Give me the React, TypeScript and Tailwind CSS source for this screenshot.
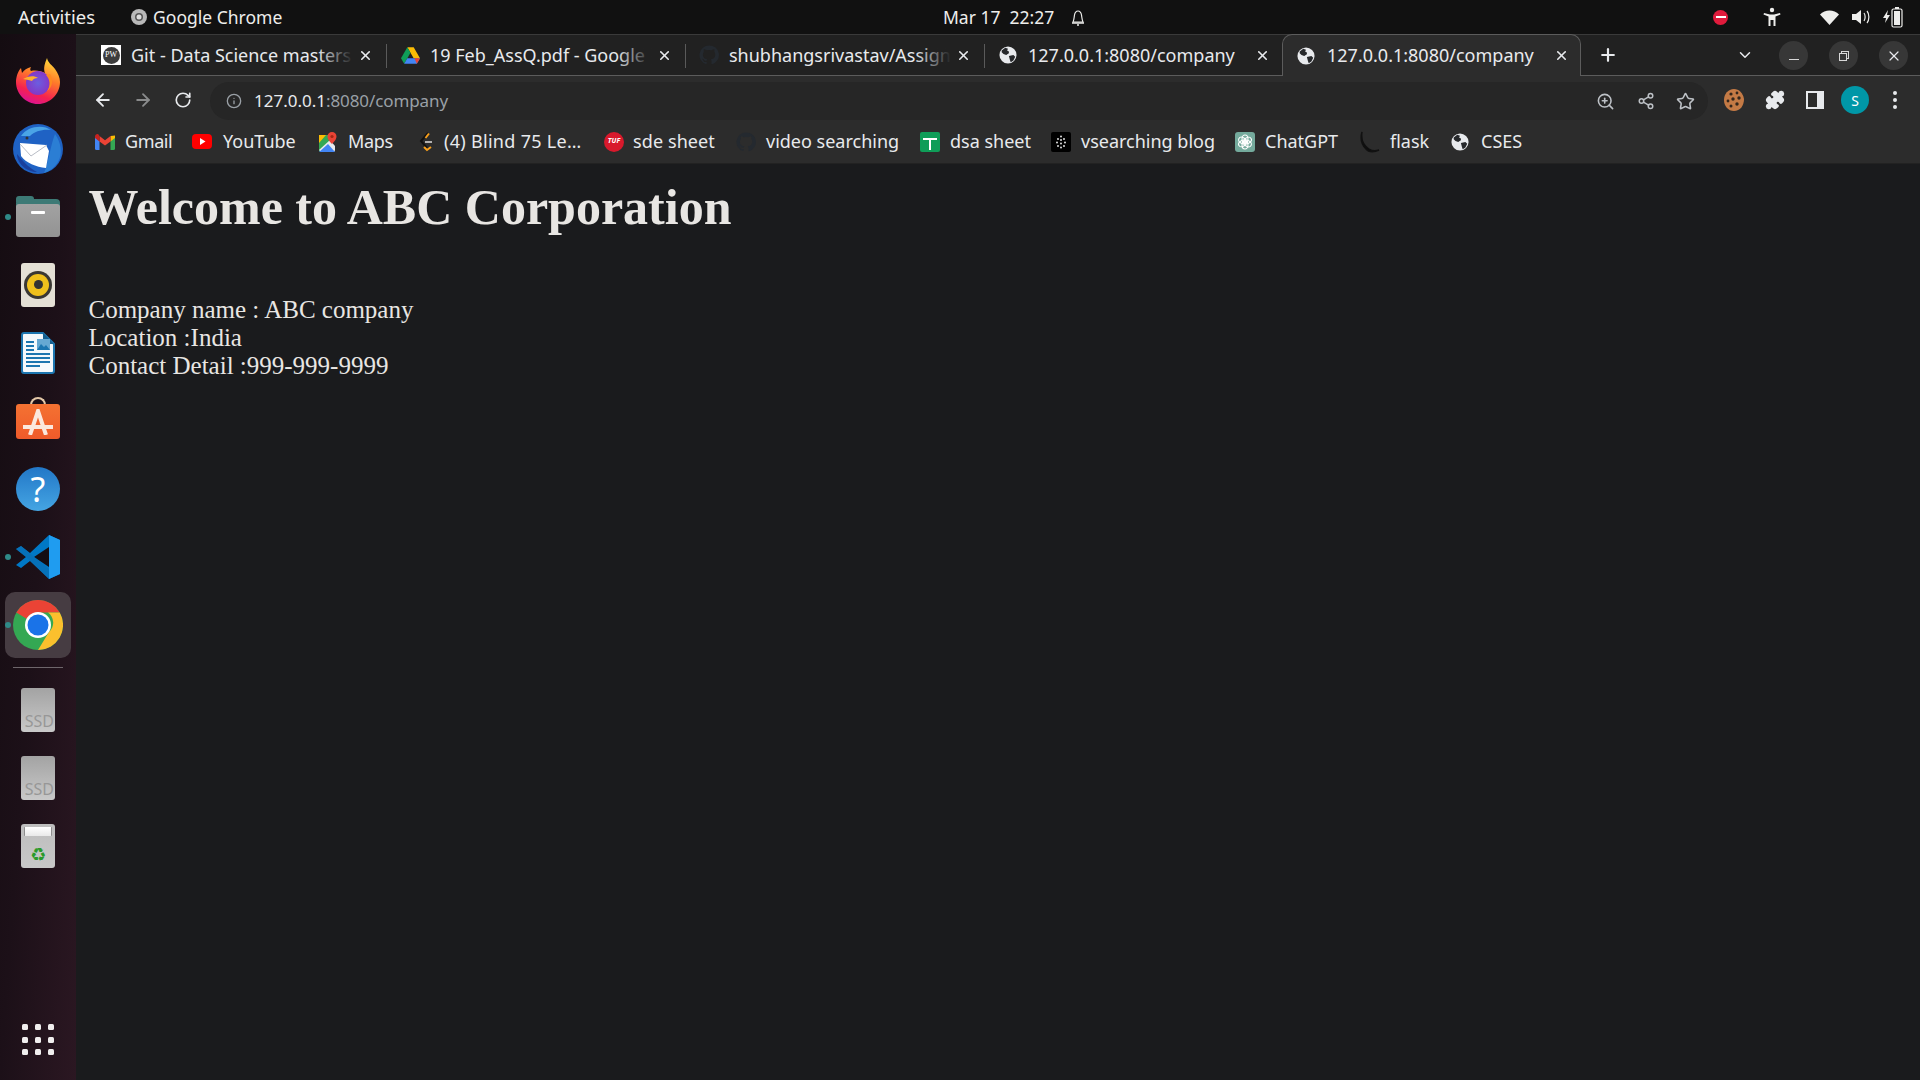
import React from "react";
import { ArrowLeft, ArrowRight, RotateCw, Info, ZoomIn, Share2, Star, Puzzle, Plus, X, ChevronDown } from "lucide-react";

const Globe = ({ c = "#e8eaed", s = 18 }: { c?: string; s?: number }) => (
  <svg width={s} height={s} viewBox="0 0 20 20" className="shrink-0">
    <circle cx="10" cy="10" r="9.5" fill={c} />
    <path d="M3 5l4-3 3 1-1 2 2 1v2l-3 2-3-1-2-2zM11 11l5-1 2 2-2 4-3 2-1-3z" fill="#26282b" />
  </svg>
);
const GitHubMark = ({ s = 20 }: { s?: number }) => (
  <svg width={s} height={s} viewBox="0 0 24 24" className="shrink-0" fill="#24292f">
    <path d="M12 .5a11.5 11.5 0 0 0-3.6 22.4c.6.1.8-.3.8-.6v-2c-3.2.7-3.9-1.5-3.9-1.5-.5-1.3-1.3-1.7-1.3-1.7-1-.7.1-.7.1-.7 1.2.1 1.8 1.2 1.8 1.2 1 1.8 2.7 1.3 3.4 1 .1-.8.4-1.3.7-1.6-2.6-.3-5.3-1.3-5.3-5.7 0-1.3.5-2.3 1.2-3.1-.1-.3-.5-1.5.1-3.1 0 0 1-.3 3.2 1.2a11 11 0 0 1 5.8 0c2.2-1.5 3.2-1.2 3.2-1.2.6 1.6.2 2.8.1 3.1.8.8 1.2 1.8 1.2 3.1 0 4.4-2.7 5.4-5.3 5.7.4.4.8 1.1.8 2.2v3.2c0 .3.2.7.8.6A11.5 11.5 0 0 0 12 .5z" />
  </svg>
);
const Drive = () => (
  <svg width="19" height="17" viewBox="0 0 24 21" className="shrink-0">
    <path d="M8 0h8l8 14h-8z" fill="#fbbc04" />
    <path d="M8 0l4 7-8 14-4-7z" fill="#0f9d58" />
    <path d="M8 14h16l-4 7H4z" fill="#4285f4" />
    <path d="M20 21l4-7h-7z" fill="#ea4335" />
  </svg>
);
const PW = () => (
  <div className="w-5 h-5 bg-white flex items-center justify-center shrink-0">
    <div className="w-[17px] h-[17px] rounded-full bg-[#3c3c3c] flex items-center justify-center text-[8px] text-white font-['Liberation_Serif',serif] leading-none">PW</div>
  </div>
);

const tabs = [
  { icon: <PW />, title: "Git - Data Science masters", fade: true },
  { icon: <Drive />, title: "19 Feb_AssQ.pdf - Google", fade: true },
  { icon: <GitHubMark />, title: "shubhangsrivastav/Assign", fade: true },
  { icon: <Globe />, title: "127.0.0.1:8080/company", fade: false },
];

const Tab = ({ icon, title, fade, last }: { icon: React.ReactNode; title: string; fade: boolean; last: boolean }) => (
  <div className="relative w-[299px] h-[41px] shrink-0 flex items-center pl-[13px] pb-[1px]">
    <div className="w-5 flex justify-center shrink-0">{icon}</div>
    <div className="relative ml-[10px] w-[222px] overflow-hidden whitespace-nowrap text-[18px] text-[#e8eaed]">
      {title}
      {fade && <div className="absolute right-0 top-0 bottom-0 w-[36px] bg-gradient-to-r from-transparent to-[#212121]" />}
    </div>
    <X size={15} strokeWidth={2.5} className="ml-[5px] text-[#e8eaed] shrink-0" />
    {!last && <div className="absolute right-0 top-[9px] w-[1px] h-[24px] bg-[#5a5a5a]" />}
  </div>
);

const Gmail = () => (
  <svg width="20" height="16" viewBox="0 0 20 16" className="shrink-0">
    <path d="M0 3v11.5A1.5 1.5 0 0 0 1.5 16H4.5V7z" fill="#4285f4" />
    <path d="M20 3v11.5a1.5 1.5 0 0 1-1.5 1.5h-3V7z" fill="#34a853" />
    <path d="M15.500 2L20 1.500V4l-4.500 3.400z" fill="#fbbc04" />
    <path d="M4.500 7.400V2L10 6.200 15.500 2v5.400L10 11.500z" fill="#ea4335" />
    <path d="M0 4V2.500C0 .5 2.300-.5 3.500.5L4.500 2v5.400z" fill="#c5221f" />
  </svg>
);
const YT = () => (
  <svg width="20" height="15" viewBox="0 0 20 15" className="shrink-0">
    <rect width="20" height="15" rx="4" fill="#f00" />
    <path d="M8 4l5.500 3.500L8 11z" fill="#fff" />
  </svg>
);
const Maps = () => (
  <svg width="18" height="20" viewBox="0 0 18 20" className="shrink-0">
    <path d="M0 3h11v17H2a2 2 0 0 1-2-2z" fill="#34a853" />
    <path d="M0 3h7L0 11z" fill="#fbbc04" />
    <path d="M0 18l11-10 5 6v4a2 2 0 0 1-2 2H2z" fill="#e8eaed" />
    <path d="M0 20l9-8 7 8z" fill="#4285f4" />
    <path d="M13 0a4.500 4.500 0 0 1 4.500 4.500C17.500 8 13 12 13 12S8.500 8 8.500 4.500A4.500 4.500 0 0 1 13 0z" fill="#ea4335" />
    <circle cx="13" cy="4.500" r="1.600" fill="#a52714" />
  </svg>
);
const LeetCode = () => (
  <svg width="20" height="22" viewBox="0 0 20 22" className="shrink-0" fill="none">
    <path d="M12 2L5 10l6 7" stroke="#111" strokeWidth="2" />
    <path d="M13 2.500L9.500 7" stroke="#f89f1b" strokeWidth="2" />
    <path d="M9 11h7" stroke="#b3b1b0" strokeWidth="2" />
    <path d="M8 16l3 3 4-3" stroke="#f89f1b" strokeWidth="2" />
  </svg>
);
const Tuf = () => (
  <div className="w-5 h-5 rounded-full bg-[#d8192c] flex items-center justify-center text-[7px] font-bold italic text-white shrink-0">TUF</div>
);
const Sheet = () => (
  <div className="relative w-5 h-5 rounded-[2px] bg-[#0f9d58] shrink-0">
    <div className="absolute left-[3px] right-[3px] top-[6px] h-[2px] bg-white" />
    <div className="absolute left-[9px] w-[2px] top-[6px] bottom-[2px] bg-white" />
  </div>
);
const Vs = () => (
  <div className="w-5 h-5 rounded-[2px] bg-black flex items-center justify-center shrink-0">
    <svg width="12" height="14" viewBox="0 0 12 14" fill="#ddd">
      <circle cx="6" cy="1.500" r="1" /><circle cx="3" cy="4" r="1" /><circle cx="9" cy="4" r="1" />
      <circle cx="6" cy="5" r="1" /><circle cx="2" cy="7.500" r="1" /><circle cx="10" cy="7.500" r="1" />
      <circle cx="6" cy="8.500" r="1" /><circle cx="3" cy="11" r="1" /><circle cx="9" cy="11" r="1" /><circle cx="6" cy="12.500" r="1" />
    </svg>
  </div>
);
const Gpt = () => (
  <div className="w-5 h-5 rounded-[3px] bg-[#74aa9c] flex items-center justify-center shrink-0">
    <svg width="16" height="16" viewBox="0 0 16 16" fill="none" stroke="#fff" strokeWidth="1.100">
      <ellipse cx="8" cy="5" rx="3" ry="4" />
      <ellipse cx="8" cy="5" rx="3" ry="4" transform="rotate(60 8 8)" />
      <ellipse cx="8" cy="5" rx="3" ry="4" transform="rotate(120 8 8)" />
      <ellipse cx="8" cy="5" rx="3" ry="4" transform="rotate(180 8 8)" />
      <ellipse cx="8" cy="5" rx="3" ry="4" transform="rotate(240 8 8)" />
      <ellipse cx="8" cy="5" rx="3" ry="4" transform="rotate(300 8 8)" />
    </svg>
  </div>
);
const Flask = () => (
  <svg width="20" height="22" viewBox="0 0 20 22" className="shrink-0">
    <path d="M2 1c-1 6 1 13 7 17 3 2 7 2 10 1-4 2-10 3-13-1C2 14 0 8 2 1z" fill="#0b0b0b" stroke="#111" strokeWidth="1.500" />
  </svg>
);

const bookmarks = [
  { icon: <Gmail />, label: "Gmail", w: "w-[97px]", tx: "ml-[10px] tracking-[-0.4px]" },
  { icon: <YT />, label: "YouTube", w: "w-[127px]", tx: "ml-[11px]" },
  { icon: <Maps />, label: "Maps", w: "w-[97px]", tx: "ml-[11px] tracking-[-0.3px]" },
  { icon: <LeetCode />, label: "(4) Blind 75 Le…", w: "w-[188px]", tx: "ml-[8px] tracking-[0.3px]" },
  { icon: <Tuf />, label: "sde sheet", w: "w-[132px]", tx: "ml-[9px] tracking-[0.1px]" },
  { icon: <GitHubMark />, label: "video searching", w: "w-[184px]", tx: "ml-[10px]" },
  { icon: <Sheet />, label: "dsa sheet", w: "w-[131px]", tx: "ml-[10px]" },
  { icon: <Vs />, label: "vsearching blog", w: "w-[184px]", tx: "ml-[10px]" },
  { icon: <Gpt />, label: "ChatGPT", w: "w-[125px]", tx: "ml-[10px]" },
  { icon: <Flask />, label: "flask", w: "w-[91px]", tx: "ml-[10px]" },
  { icon: <Globe />, label: "CSES", w: "w-[73px]", tx: "ml-[12px]" },
];

const Firefox = () => (
  <svg width="44" height="46" viewBox="0 0 44 46">
    <defs>
      <linearGradient id="ffa" x1="0.7" y1="0" x2="0.3" y2="1"><stop offset="0" stopColor="#ffd83a" /><stop offset="0.4" stopColor="#ff7a2a" /><stop offset="0.75" stopColor="#f5224f" /><stop offset="1" stopColor="#d9119a" /></linearGradient>
      <radialGradient id="ffb" cx="0.5" cy="0.5" r="0.6"><stop offset="0" stopColor="#6b5ee0" /><stop offset="1" stopColor="#8a2fc0" /></radialGradient>
    </defs>
    <path d="M31 0c1 5 5 7 8 11 3 4 5 9 5 13 0 12-10 22-22 22S0 36 0 24c0-5 2-11 5-14l1 5c2-3 5-5 9-6-1 2-1 3 0 4 5-1 10 0 14 2-2-5 0-10 2-15z" fill="url(#ffa)" />
    <circle cx="22" cy="25" r="12" fill="url(#ffb)" />
    <path d="M7 21c5-3 11-4 15-1-3 0-5 1-6 3-2-1-5-1-9-2z" fill="#ffb02e" />
    <path d="M30 17c4 4 5 11 1 16 5-3 7-11 3-17z" fill="#ff8a1f" />
  </svg>
);
const Thunderbird = () => (
  <svg width="50" height="50" viewBox="0 0 50 50">
    <circle cx="25" cy="25" r="25" fill="#1f62c4" />
    <path d="M8 12C14 2 30 0 38 6c-8-1-16 1-21 6z" fill="#4aa4e6" />
    <path d="M42 10c6 8 8 20 3 28-3 5-8 9-14 11 4-8 6-26 11-39z" fill="#2b7ed4" />
    <path d="M4 30C4 40 14 48 24 48c-6-3-12-8-20-18z" fill="#1a3f9c" />
    <path d="M7 19l26 2 3 6-3 17c-10-1-20-5-25-12z" fill="#fff" />
    <path d="M7 20l11 12 16-11" fill="none" stroke="#b9bdc6" strokeWidth="1" />
    <circle cx="14" cy="14" r="1.500" fill="#333" />
  </svg>
);
const Files = () => (
  <div className="relative w-11 h-[41px]">
    <div className="absolute left-0 top-0 w-[18px] h-[6px] rounded-t-[3px] bg-[#3d7a76]" />
    <div className="absolute left-0 right-0 top-[3px] h-[14px] rounded-t-[4px] bg-[#3d7a76]" />
    <div className="absolute left-0 right-0 top-[8px] bottom-0 rounded-[3px] bg-gradient-to-b from-[#a2a2a2] to-[#939393]" />
    <div className="absolute left-[15px] top-[15px] w-[14px] h-[3px] rounded-[1px] bg-white" />
  </div>
);
const Rhythmbox = () => (
  <div className="w-[34px] h-11 rounded-[3px] bg-[#e4e0d5] flex items-center justify-center">
    <div className="w-7 h-7 rounded-full bg-[#3a3833] flex items-center justify-center">
      <div className="w-[22px] h-[22px] rounded-full bg-[#f0c11c] flex items-center justify-center">
        <div className="w-[9px] h-[9px] rounded-full bg-[#333]" />
      </div>
    </div>
  </div>
);
const Writer = () => (
  <svg width="34" height="42" viewBox="0 0 34 42">
    <path d="M1 3a2 2 0 0 1 2-2h19l11 11v27a2 2 0 0 1-2 2H3a2 2 0 0 1-2-2z" fill="#f4f9fc" stroke="#1c76b0" strokeWidth="2" />
    <path d="M22 1l11 11H22z" fill="#155f8e" />
    <path d="M5 10h8M5 14h8M5 18h8M5 22h24M5 26h24M5 30h24M5 34h14" stroke="#1c76b0" strokeWidth="2" />
    <rect x="16" y="7" width="13" height="11" fill="#66a8d2" />
    <path d="M16 18l4-6 3 3 2-2 4 5z" fill="#1c76b0" />
  </svg>
);
const Software = () => (
  <div className="relative w-11 h-[42px] -mt-[5px]">
    <div className="absolute left-[14px] top-0 w-4 h-4 rounded-t-full border-2 border-b-0 border-[#e3c8a8]" />
    <div className="absolute left-0 right-0 top-[7px] bottom-0 rounded-[3px] bg-gradient-to-b from-[#f47232] to-[#ef5a2a] flex items-center justify-center">
      <svg width="30" height="26" viewBox="0 0 30 26" fill="none" stroke="#fbe8dd" strokeWidth="4">
        <path d="M7 26L15 2l8 24M0 18h30" />
      </svg>
    </div>
  </div>
);
const Help = () => (
  <div className="w-11 h-11 rounded-full bg-gradient-to-b from-[#2277c7] to-[#45a5e3] flex items-center justify-center text-[34px] text-white font-['Noto_Sans',sans-serif] leading-none">?</div>
);
const VSCode = () => (
  <svg width="44" height="44" viewBox="0 0 44 44">
    <path d="M33 0l11 5v34l-11 5L14 26 5 33l-5-3 10-8L0 14l5-3 9 7z" fill="#0078c6" />
    <path d="M33 0l11 5v34l-11 5z" fill="#1f9cf0" />
    <path d="M33 12L18 22l15 10z" fill="#140d12" />
    <path d="M0 14l5-3 28 23v10L10 22z" fill="#0a6db0" opacity="0.6" />
  </svg>
);
const Chrome = () => (
  <svg width="50" height="50" viewBox="0 0 50 50">
    <circle cx="25" cy="25" r="25" fill="#34a853" />
    <path d="M25 0a25 25 0 0 1 21.700 12.500H25a12.500 12.500 0 0 0-11 6.500L3.300 12.500A25 25 0 0 1 25 0z" fill="#ea4335" />
    <path d="M46.700 12.500A25 25 0 0 1 25 50l11-18a12.500 12.500 0 0 0-1-19.500z" fill="#fbc02d" />
    <circle cx="25" cy="25" r="13" fill="#fff" />
    <circle cx="25" cy="25" r="10.500" fill="#1a73e8" />
  </svg>
);
const Ssd = () => (
  <div className="w-[34px] h-11 rounded-[3px] bg-gradient-to-b from-[#a3a3a3] to-[#c9c9c9] flex items-end justify-end pr-[1px] pb-[3px]">
    <span className="text-[16px] text-[#979797] font-['Noto_Sans',sans-serif] leading-none whitespace-nowrap">SSD</span>
  </div>
);
const Trash = () => (
  <div className="w-[34px] h-11 rounded-[3px] bg-gradient-to-b from-[#bdbdbd] to-[#c8c8c8] flex flex-col items-center pt-[3px]">
    <div className="w-[28px] h-[9px] rounded-[1px] bg-gradient-to-b from-white to-[#e9e9e9] border-l border-r border-[#8e8e8e]" />
    <span className="mt-[10px] text-[18px] text-[#2a9a2a] leading-none font-['DejaVu_Sans',sans-serif]">♻</span>
  </div>
);

const DockSlot = ({ children, dot, active }: { children: React.ReactNode; dot?: boolean; active?: boolean }) => (
  <div className="relative h-[68px] w-full flex items-center justify-center">
    {active && <div className="absolute left-[5px] top-[1px] w-[66px] h-[66px] rounded-[10px] bg-[#463c42]" />}
    <div className="relative flex items-center justify-center">{children}</div>
    {dot && <div className="absolute left-[5px] top-[31px] w-[6px] h-[6px] rounded-full bg-[#2f8a88]" />}
  </div>
);

const SidePanelIcon = () => (
  <div className="w-[18px] h-[18px] border-[2.5px] border-[#e8eaed] border-r-[7px] bg-transparent" />
);
const Cookie = () => (
  <svg width="20" height="22" viewBox="0 0 20 22" fill="#33261c">
    <path d="M10 0c5 0 9 4 10 10 0 7-4 12-10 12S0 17 0 11 4 0 10 0z" fill="#c47a45" />
    <circle cx="7" cy="5" r="1.600" /><circle cx="13" cy="4" r="1.400" /><circle cx="15" cy="9" r="1.700" />
    <circle cx="9" cy="10" r="1.700" /><circle cx="4" cy="12" r="1.400" /><circle cx="13" cy="15" r="1.700" /><circle cx="7" cy="17" r="1.500" />
  </svg>
);

export default function App() {
  return (
    <div className="w-[1920px] h-[1080px] overflow-hidden flex flex-col bg-[#181a1b] font-['Noto_Sans',sans-serif]">
      {/* GNOME top bar */}
      <div className="relative h-[34px] shrink-0 bg-[#111111] flex items-center text-[17.500px] text-[#eeeeec]">
        <span className="ml-[18px] text-[18.500px]">Activities</span>
        <div className="ml-[36px] flex items-center">
          <svg width="16" height="16" viewBox="0 0 16 16"><circle cx="8" cy="8" r="8" fill="#b9b9b9" /><circle cx="8" cy="8" r="4" fill="#555" /><circle cx="8" cy="8" r="2.500" fill="#ddd" /></svg>
          <span className="ml-[6px]">Google Chrome</span>
        </div>
        <div className="absolute left-[943px] top-0 h-full flex items-center">
          <span>Mar 17&nbsp;&nbsp;22:27</span>
          <svg className="ml-[17px]" width="14" height="17" viewBox="0 0 14 17" fill="none" stroke="#eeeeec" strokeWidth="1.200">
            <path d="M2 13c1-2 1-4 1.500-7C4 3 5 2 7 2s3 1 3.500 4c.5 3 .5 5 1.500 7z" />
            <path d="M1 14h12" strokeWidth="1.500" /><path d="M6 16h2" strokeWidth="1.500" />
          </svg>
        </div>
        <div className="ml-auto flex items-center mr-[17px]">
          <div className="w-[15px] h-[15px] rounded-full bg-[#e01b3c] flex items-center justify-center mr-[34px]"><div className="w-[10px] h-[2.500px] bg-white" /></div>
          <svg width="20" height="20" viewBox="0 0 20 20" fill="#eeeeec" className="mr-[38px]">
            <circle cx="10" cy="3" r="2.200" /><path d="M2 6l6 1.500h4L18 6l.5 1.500-5 2V19h-2v-6H8.500v6h-2V9.500l-5-2z" />
          </svg>
          <svg width="19" height="15" viewBox="0 0 19 15" fill="#eeeeec" className="mr-[13px]"><path d="M9.500 15L0 4.500C5 -1 14 -1 19 4.500z" /></svg>
          <svg width="18" height="16" viewBox="0 0 18 16" fill="#eeeeec" className="mr-[13px]">
            <path d="M0 5h4l5-4v14l-5-4H0z" /><path d="M12 4c1.500 2 1.500 6 0 8M15 2c2.500 3 2.500 9 0 12" fill="none" stroke="#eeeeec" strokeWidth="1.200" />
          </svg>
          <svg width="20" height="22" viewBox="0 0 20 22" fill="none">
            <path d="M5 4L0 12h3l-1 5 5-8H4z" fill="#eeeeec" />
            <rect x="9" y="3" width="10" height="18" rx="1.500" stroke="#eeeeec" strokeWidth="1.200" /><rect x="11" y="5" width="6" height="14" fill="#eeeeec" /><rect x="12" y="1" width="4" height="2" fill="#eeeeec" />
          </svg>
        </div>
      </div>

      <div className="flex flex-1 min-h-0">
        {/* Dock */}
        <div className="w-[76px] shrink-0 flex flex-col bg-gradient-to-br from-[#140c11] via-[#1c1018] to-[#2b1722] pt-[12.500px] pb-[25px]">
          <DockSlot><Firefox /></DockSlot>
          <DockSlot><Thunderbird /></DockSlot>
          <DockSlot dot><Files /></DockSlot>
          <DockSlot><Rhythmbox /></DockSlot>
          <DockSlot><Writer /></DockSlot>
          <DockSlot><Software /></DockSlot>
          <DockSlot><Help /></DockSlot>
          <DockSlot dot><VSCode /></DockSlot>
          <DockSlot dot active><Chrome /></DockSlot>
          <div className="mx-[13px] mt-[8px] h-[1px] bg-[#6e666b] shrink-0" />
          <div className="mt-[8px] flex flex-col">
            <DockSlot><Ssd /></DockSlot>
            <DockSlot><Ssd /></DockSlot>
            <DockSlot><Trash /></DockSlot>
          </div>
          <div className="mt-auto ml-[22px] grid grid-cols-3 gap-x-[6.500px] gap-y-[6.500px] w-[32px]">
            {[0, 1, 2, 3, 4, 5, 6, 7, 8].map((i) => (
              <div key={i} className="w-[6px] h-[6px] rounded-[1.500px] bg-[#f0eeee]" />
            ))}
          </div>
        </div>

        {/* Browser window */}
        <div className="flex-1 min-w-0 flex flex-col">
          <div className="relative h-[42px] shrink-0 bg-[#212121] border-t border-[#3a3a3a] border-b border-b-[#5c5c5c] flex items-start pl-[12px] box-border">
            {tabs.map((t, i) => (
              <Tab key={i} icon={t.icon} title={t.title} fade={t.fade} last={i === 3} />
            ))}
            <div className="relative z-10 w-[299px] h-[42px] shrink-0 -mt-[1px] rounded-t-[10px] bg-[#2c2c2c] border border-b-0 border-[#5c5c5c] flex items-center pl-[14px] ml-[-2px] text-[18px] text-[#e8eaed]">
              <Globe />
              <span className="ml-[12px] w-[224px] whitespace-nowrap">127.0.0.1:8080/company</span>
              <X size={15} strokeWidth={2.5} className="ml-[3px]" />
            </div>
            <Plus size={20} strokeWidth={2.6} className="ml-[17px] mt-[10px] text-[#e8eaed]" />
            <ChevronDown size={18} strokeWidth={2} className="ml-[118px] mt-[11px] text-[#e8eaed]" />
            <div className="ml-[25px] mt-[6px] w-[29px] h-[29px] rounded-full bg-[#373737] flex items-center justify-center">
              <div className="mt-[8px] w-[10px] h-[1.500px] bg-[#d8d8d8]" />
            </div>
            <div className="ml-[21px] mt-[6px] w-[29px] h-[29px] rounded-full bg-[#373737] flex items-center justify-center">
              <div className="relative w-[10px] h-[10px]">
                <div className="absolute right-0 top-0 w-[8px] h-[8px] border border-[#d8d8d8]" />
                <div className="absolute left-0 bottom-0 w-[8px] h-[8px] border border-[#d8d8d8] bg-[#373737]" />
              </div>
            </div>
            <div className="ml-[21px] mt-[6px] w-[29px] h-[29px] rounded-full bg-[#373737] flex items-center justify-center">
              <X size={16} strokeWidth={1.800} className="text-[#e8eaed]" />
            </div>
          </div>

          {/* Toolbar */}
          <div className="h-[44px] shrink-0 bg-[#2c2c2c] flex items-center pl-[17px] pt-[4px]">
            <ArrowLeft size={20} strokeWidth={2.200} className="text-[#e8eaed]" />
            <ArrowRight size={20} strokeWidth={2.200} className="ml-[20px] text-[#8a8b8c]" />
            <RotateCw size={18} strokeWidth={2.200} className="ml-[21px] text-[#e8eaed]" />
            <div className="ml-[18px] flex-1 h-[38px] rounded-full bg-[#262626] flex items-center pl-[16px] text-[17px] mt-[2px]">
              <Info size={16} strokeWidth={2} className="text-[#9aa0a6]" />
              <span className="ml-[12px] text-[#e8eaed] -mt-[1px]">127.0.0.1</span>
              <span className="text-[#9aa0a6] -mt-[1px] tracking-[-0.1px]">:8080/company</span>
              <ZoomIn size={19} strokeWidth={2} className="ml-auto text-[#bdc1c6]" />
              <Share2 size={18} strokeWidth={2} className="ml-[22px] text-[#bdc1c6]" />
              <Star size={19} strokeWidth={2} className="ml-[21px] mr-[13px] text-[#bdc1c6]" />
            </div>
            <div className="ml-[16px] mr-[15px] flex items-center shrink-0">
              <Cookie />
              <Puzzle size={20} strokeWidth={2} className="ml-[21px] text-[#e8eaed] fill-[#e8eaed]" />
              <div className="ml-[21px]"><SidePanelIcon /></div>
              <div className="ml-[17px] w-7 h-7 rounded-full bg-[#0097a7] flex items-center justify-center text-[14px] text-white">S</div>
              <div className="ml-[24px] mr-[8px] flex flex-col gap-[3px]">
                <div className="w-[4px] h-[4px] rounded-full bg-[#e8eaed]" />
                <div className="w-[4px] h-[4px] rounded-full bg-[#e8eaed]" />
                <div className="w-[4px] h-[4px] rounded-full bg-[#e8eaed]" />
              </div>
            </div>
          </div>

          {/* Bookmarks */}
          <div className="h-[44px] shrink-0 bg-[#2c2c2c] border-b border-[#222] flex items-center pl-[19px] text-[18px] text-[#e8eaed]">
            {bookmarks.map((b) => (
              <div key={b.label} className={`${b.w} shrink-0 flex items-center whitespace-nowrap`}>
                {b.icon}
                <span className={b.tx}>{b.label}</span>
              </div>
            ))}
          </div>

          {/* Page */}
          <div className="flex-1 bg-[#1a1b1d] text-[#e8e6e3] font-['Liberation_Serif',serif] pl-[12.500px] pt-[15px]">
            <h1 className="text-[50px] font-bold leading-[57px]">Welcome to ABC Corporation</h1>
            <div className="mt-[60px] text-[25px] leading-[28px]">
              <p>Company name : ABC company</p>
              <p>Location :India</p>
              <p>Contact Detail :999-999-9999</p>
            </div>
          </div>
        </div>
      </div>
    </div>
  );
}
